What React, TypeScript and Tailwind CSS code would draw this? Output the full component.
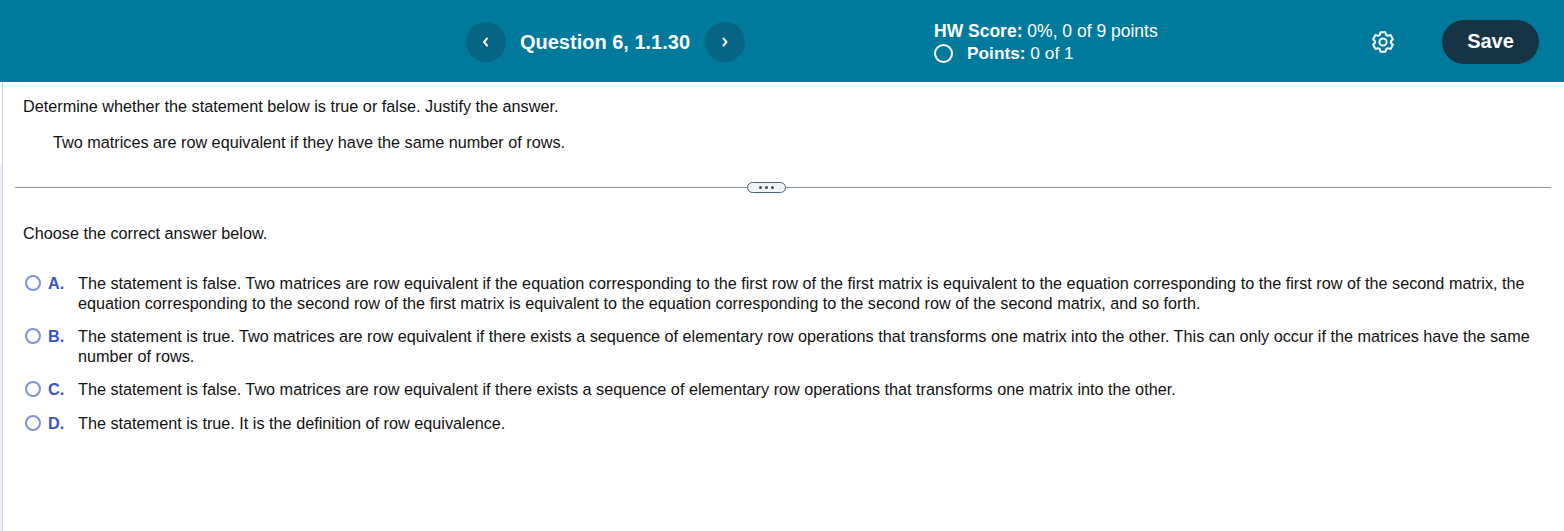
import React from 'react';

const choices = [
  {
    letter: 'A.',
    text: 'The statement is false. Two matrices are row equivalent if the equation corresponding to the first row of the first matrix is equivalent to the equation corresponding to the first row of the second matrix, the equation corresponding to the second row of the first matrix is equivalent to the equation corresponding to the second row of the second matrix, and so forth.',
  },
  {
    letter: 'B.',
    text: 'The statement is true. Two matrices are row equivalent if there exists a sequence of elementary row operations that transforms one matrix into the other. This can only occur if the matrices have the same number of rows.',
  },
  {
    letter: 'C.',
    text: 'The statement is false. Two matrices are row equivalent if there exists a sequence of elementary row operations that transforms one matrix into the other.',
  },
  {
    letter: 'D.',
    text: 'The statement is true. It is the definition of row equivalence.',
  },
];

function NavButton({ dir }: { dir: 'prev' | 'next' }) {
  return (
    <button className="w-10 h-10 rounded-full bg-[#066484] flex items-center justify-center shrink-0">
      <svg width="10" height="12" viewBox="0 0 10 12" fill="none" stroke="white" strokeWidth="2" strokeLinecap="round" strokeLinejoin="round">
        {dir === 'prev' ? <path d="M6 2.5 L3 6 L6 9.5" /> : <path d="M3.5 2.5 L6.5 6 L3.5 9.5" />}
      </svg>
    </button>
  );
}

function Gear() {
  return (
    <svg width="24" height="24" viewBox="0 0 24 24" fill="none" stroke="white" strokeWidth="2" strokeLinejoin="round">
      <path d="M9.6 2.2h4.8l.8 2.7 1.6.9 2.7-.7 2.4 4.1-2 2 .1.8-.1.8 2 2-2.4 4.1-2.7-.7-1.6.9-.8 2.7H9.6l-.8-2.7-1.6-.9-2.7.7-2.4-4.1 2-2-.1-.8.1-.8-2-2 2.4-4.1 2.7.7 1.6-.9z" />
      <circle cx="12" cy="12" r="3.6" />
    </svg>
  );
}

export default function App() {
  return (
    <div className="w-[1564px] h-[531px] bg-white overflow-hidden font-['Liberation_Sans',Arial,sans-serif] text-[16.23px] text-[#111111]">
      {/* Top bar */}
      <header className="h-[82px] bg-[#007a9c] flex items-center pl-[466px] pr-[25px] pt-[2px] text-white">
        <div className="flex items-center w-[279px] justify-between">
          <NavButton dir="prev" />
          <span className="text-[20px] font-bold -ml-[1px]">Question 6, 1.1.30</span>
          <NavButton dir="next" />
        </div>
        <div className="ml-[189px] text-[17.5px] leading-[22px] w-[300px]">
          <div>
            <span className="font-bold">HW Score:</span> 0%, 0 of 9 points
          </div>
          <div className="flex items-center">
            <span className="w-[19px] h-[19px] rounded-full border-2 border-white mr-[14px]" />
            <span className="text-[17.3px]">
              <span className="font-bold">Points:</span> 0 of 1
            </span>
          </div>
        </div>
        <div className="ml-[137px]">
          <Gear />
        </div>
        <button className="ml-[47px] w-[97px] h-[44px] pb-[2px] rounded-full bg-[#163446] text-[20px] font-bold">Save</button>
      </header>

      <div className="flex h-[449px]">
        {/* Left rail */}
        <div className="w-[2px] flex flex-col">
          <div className="h-[82px] bg-white" />
          <div className="flex-1 bg-[#eef0f5]" />
        </div>

        {/* Question body */}
        <main className="flex-1 border-l border-[#cfd7e9] pt-[15px]">
          <p className="pl-[20px] leading-[18px]">Determine whether the statement below is true or false. Justify the answer.</p>
          <p className="pl-[50px] mt-[18px] leading-[18px]">Two matrices are row equivalent if they have the same number of rows.</p>

          <div className="relative mt-[36px] ml-[12px] mr-[13px] h-px bg-[#8b93a3]">
            <span className="absolute left-[732px] -top-[5px] w-[39px] h-[11px] rounded-full border border-[#4f6272] bg-[#f1f3f6] flex items-center justify-center gap-[3px]">
              <i className="w-[3px] h-[3px] rounded-full bg-[#3c4a58]" />
              <i className="w-[3px] h-[3px] rounded-full bg-[#3c4a58]" />
              <i className="w-[3px] h-[3px] rounded-full bg-[#3c4a58]" />
            </span>
          </div>

          <p className="pl-[20px] mt-[36px] leading-[18px]">Choose the correct answer below.</p>

          <ul className="mt-[32px] pl-[22px] pr-[28px] flex flex-col gap-[14px]">
            {choices.map((c) => (
              <li key={c.letter} className="flex items-start leading-[19.5px]">
                <span className="w-4 h-4 mt-[1px] rounded-full border-2 border-[#8391d9] shrink-0" />
                <span className="w-[37px] pl-[7px] font-bold text-[#3a55c4] shrink-0">{c.letter}</span>
                <span className="flex-1">{c.text}</span>
              </li>
            ))}
          </ul>
        </main>
      </div>
    </div>
  );
}
